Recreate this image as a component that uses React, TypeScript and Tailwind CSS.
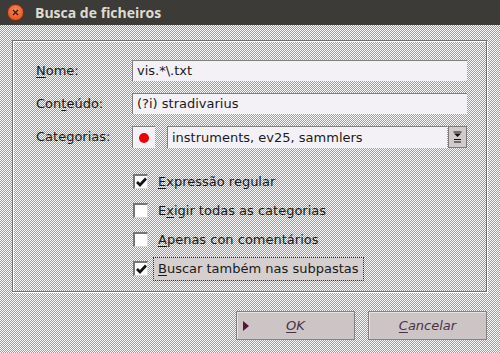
import React from "react";

const font = { fontFamily: '"DejaVu Sans", Verdana, sans-serif' };

function Check({ checked }: { checked: boolean }) {
  return (
    <div className="w-[15px] h-[15px] bg-white border-t-2 border-l-2 border-t-[#7a7676] border-l-[#7a7676] border-r border-b border-r-[#dedada] border-b-[#dedada] flex items-center justify-center">
      {checked && (
        <svg width="11" height="10" viewBox="0 0 11 10">
          <path d="M1 5 L4 8 L10 1.5" stroke="#111" strokeWidth="2.7" fill="none" strokeLinejoin="miter" />
        </svg>
      )}
    </div>
  );
}

function CheckRow({ checked, pre, u, post, focused }: { checked: boolean; pre: string; u: string; post: string; focused?: boolean }) {
  return (
    <div className="flex items-center h-[29px]">
      <div className="ml-[1px]">
        <Check checked={checked} />
      </div>
      <div
        className={
          "ml-[5px] px-[4px] h-[24px] flex items-center text-[13px] text-[#1a1a1a] " +
          (focused ? "bg-[#d5cfcf] border border-dotted border-[#333]" : "border border-transparent")
        }
      >
        {pre}
        <span className="underline underline-offset-[2px]">{u}</span>
        {post}
      </div>
    </div>
  );
}

export default function App() {
  return (
    <div
      className="w-[500px] h-[353px] flex flex-col bg-[image:repeating-conic-gradient(#a19c9c_0%_25%,#fbfbfb_0%_50%)] bg-[length:2px_2px] overflow-hidden"
      style={font}
    >
      {/* title bar */}
      <div className="h-[25px] bg-[#3c3b37] flex items-center shrink-0">
        <div className="ml-[7px] w-[17px] h-[17px] rounded-full bg-[radial-gradient(circle_at_50%_35%,#f58a5a,#de4815)] border border-[#8a2a0a] flex items-center justify-center">
          <svg width="7" height="7" viewBox="0 0 7 7">
            <path d="M1 1 L6 6 M6 1 L1 6" stroke="#3a1a0c" strokeWidth="1.3" />
          </svg>
        </div>
        <div
          className="ml-[11px] text-[14px] font-bold text-[#dfdbd2]"
          style={{ fontFamily: '"Open Sans", "DejaVu Sans", sans-serif' }}
        >
          Busca de ficheiros
        </div>
      </div>

      {/* group box */}
      <div className="mt-[15px] ml-[12px] w-[475px] h-[252px] border border-[#747070] shadow-[1px_1px_0_#ffffff,inset_1px_1px_0_#ffffff] shrink-0">
        <div className="pt-[19px] pl-[23px] flex flex-col gap-[12px]">
          <div className="flex items-center">
            <div className="w-[96px] text-[13px] text-[#1a1a1a]">
              <span className="underline underline-offset-[2px]">N</span>ome:
            </div>
            <div className="w-[335px] h-[21px] bg-[#f3f1f6] border-t border-l border-[#808080] flex items-center pl-[4px] text-[13px] text-[#1a1a1a]">
              vis.*\.txt
            </div>
          </div>
          <div className="flex items-center">
            <div className="w-[96px] text-[13px] text-[#1a1a1a]">
              Con<span className="underline underline-offset-[2px]">t</span>eúdo:
            </div>
            <div className="w-[335px] h-[21px] bg-[#f3f1f6] border-t border-l border-[#808080] flex items-center pl-[4px] text-[13px] text-[#1a1a1a]">
              (?i) stradivarius
            </div>
          </div>
          <div className="flex items-center">
            <div className="w-[96px] text-[13px] text-[#1a1a1a]">Categorias:</div>
            <div className="w-[23px] h-[22px] bg-[#f3f1f6] border-t border-l border-[#808080] flex items-center justify-center">
              <div className="w-[10px] h-[10px] rounded-full bg-[#ee0000]" />
            </div>
            <div className="ml-[12px] w-[280px] h-[22px] bg-[#f3f1f6] border-t border-l border-[#808080] flex items-center pl-[4px] text-[13px] text-[#1a1a1a]">
              instruments, ev25, sammlers
            </div>
            <div className="ml-[1px] w-[19px] h-[22px] bg-[#d2caca] border border-[#7e7a7a] flex flex-col items-center justify-center gap-[1px]">
              <svg width="9" height="12" viewBox="0 0 9 12">
                <path d="M0.5 1 H8.5" stroke="#111" strokeWidth="1" />
                <path d="M1 2.5 L8 2.5 L4.5 6 Z" fill="#111" />
                <path d="M1 8.5 H8 M1 11 H8" stroke="#111" strokeWidth="1.2" />
              </svg>
            </div>
          </div>
          <div className="pl-[96px] mt-[7px] flex flex-col">
            <CheckRow checked pre="" u="E" post="xpressão regular" />
            <CheckRow checked={false} pre="E" u="x" post="igir todas as categorias" />
            <CheckRow checked={false} pre="" u="A" post="penas con comentários" />
            <CheckRow checked pre="" u="B" post="uscar também nas subpastas" focused />
          </div>
        </div>
      </div>

      {/* buttons */}
      <div className="mt-[19px] flex justify-end gap-[13px] pr-[13px]">
        <div className="relative w-[119px] h-[29px] bg-[#cdc5c5] border border-[#868282] shadow-[inset_1px_1px_0_#e8e4e4] flex items-center justify-center text-[13px] italic text-[#4a3145]">
          <svg className="absolute left-[6px] top-[9px]" width="6" height="10" viewBox="0 0 6 10">
            <path d="M0 0 L6 5 L0 10 Z" fill="#5a1238" />
          </svg>
          <span>
            <span className="underline underline-offset-[2px]">O</span>K
          </span>
        </div>
        <div className="w-[119px] h-[29px] bg-[#cdc5c5] border border-[#868282] shadow-[inset_1px_1px_0_#e8e4e4] flex items-center justify-center text-[13px] italic text-[#4a3145]">
          <span>
            <span className="underline underline-offset-[2px]">C</span>ancelar
          </span>
        </div>
      </div>
    </div>
  );
}
